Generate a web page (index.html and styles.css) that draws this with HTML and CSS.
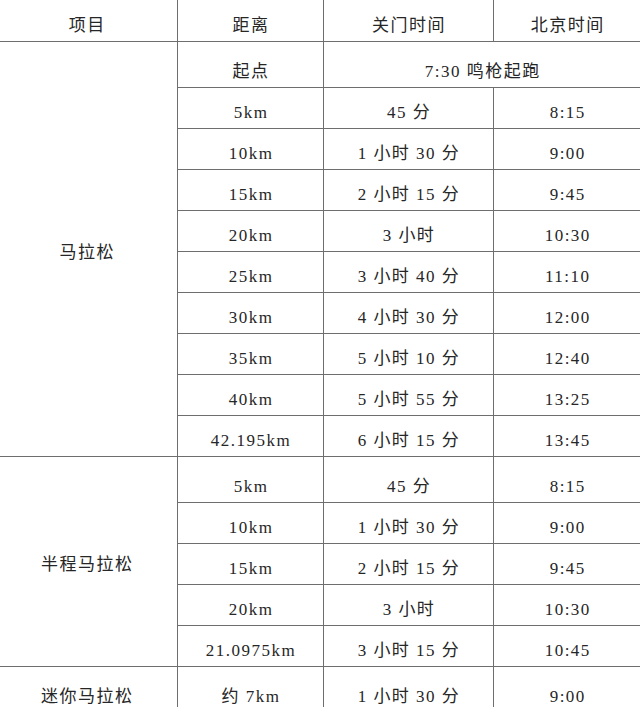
FILE: index.html
```html
<!DOCTYPE html>
<html lang="zh">
<head>
<meta charset="utf-8">
<link rel="stylesheet" href="styles.css">
</head>
<body>
<table class="schedule">
  <colgroup>
    <col class="c1"><col class="c2"><col class="c3"><col class="c4">
  </colgroup>
  <thead>
    <tr class="head"><th>项目</th><th>距离</th><th>关门时间</th><th>北京时间</th></tr>
  </thead>
  <tbody>
    <tr class="first"><td class="group" rowspan="10">马拉松</td><td>起点</td><td colspan="2">7:30 鸣枪起跑</td></tr>
    <tr><td>5km</td><td>45 分</td><td>8:15</td></tr>
    <tr><td>10km</td><td>1 小时 30 分</td><td>9:00</td></tr>
    <tr><td>15km</td><td>2 小时 15 分</td><td>9:45</td></tr>
    <tr><td>20km</td><td>3 小时</td><td>10:30</td></tr>
    <tr><td>25km</td><td>3 小时 40 分</td><td>11:10</td></tr>
    <tr><td>30km</td><td>4 小时 30 分</td><td>12:00</td></tr>
    <tr><td>35km</td><td>5 小时 10 分</td><td>12:40</td></tr>
    <tr><td>40km</td><td>5 小时 55 分</td><td>13:25</td></tr>
    <tr><td>42.195km</td><td>6 小时 15 分</td><td>13:45</td></tr>
    <tr class="first"><td class="group" rowspan="5">半程马拉松</td><td>5km</td><td>45 分</td><td>8:15</td></tr>
    <tr><td>10km</td><td>1 小时 30 分</td><td>9:00</td></tr>
    <tr><td>15km</td><td>2 小时 15 分</td><td>9:45</td></tr>
    <tr><td>20km</td><td>3 小时</td><td>10:30</td></tr>
    <tr><td>21.0975km</td><td>3 小时 15 分</td><td>10:45</td></tr>
    <tr class="first"><td class="solo">迷你马拉松</td><td>约 7km</td><td>1 小时 30 分</td><td>9:00</td></tr>
  </tbody>
</table>
</body>
</html>
```

FILE: styles.css
```css
html, body {
  margin: 0;
  padding: 0;
  background: #ffffff;
  overflow: hidden;
}

.schedule {
  width: 644px;
  margin-left: -4px;
  table-layout: fixed;
  border-collapse: collapse;
  border-style: hidden;
  font-family: "Liberation Serif", "Noto Sans CJK SC", serif;
  font-size: 17px;
  color: #262626;
  letter-spacing: 1.5px;
}

.c1 { width: 181px; }
.c2 { width: 146px; }
.c3 { width: 170px; }
.c4 { width: 147px; }

.schedule th,
.schedule td {
  border: 1px solid #6e6e6e;
  padding: 0 0 5px 2px;
  text-align: center;
  vertical-align: bottom;
  line-height: 20px;
  font-weight: normal;
  white-space: nowrap;
}

.schedule tr { height: 41px; }
.schedule tr.first { height: 46px; }

.schedule td.group {
  vertical-align: middle;
  padding: 8px 0 0 2px;
}
```
